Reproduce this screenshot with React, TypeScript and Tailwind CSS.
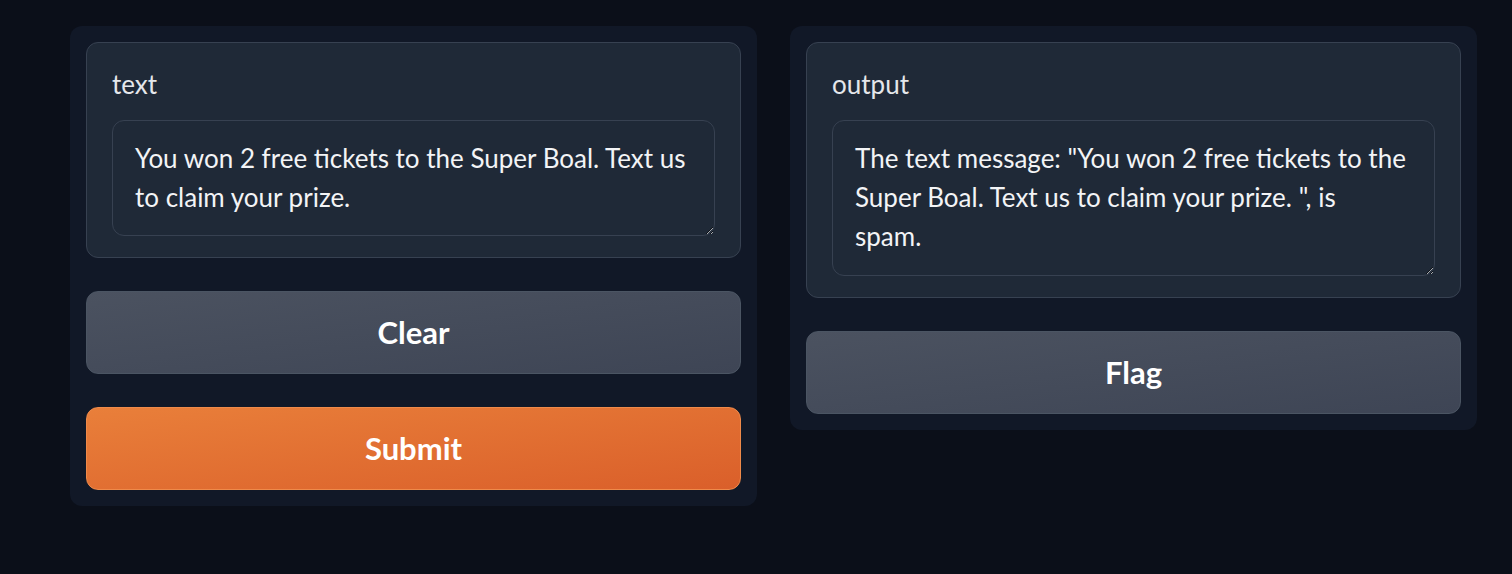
import React from "react";

const font = { fontFamily: "Lato, 'Noto Sans', sans-serif" };

function Block({ label, value, h, pr }: { label: string; value: string; h: string; pr: string }) {
  return (
    <div className="rounded-xl border border-[#374151] bg-[#1f2937] pt-[22px] pb-[21px] px-[25px]">
      <div className="text-[26px] leading-[39px] text-[#e5e7eb]">{label}</div>
      <textarea
        readOnly
        defaultValue={value}
        className={`mt-[16px] block w-full ${h} ${pr} rounded-xl border border-[#374151] bg-[#1f2937] pl-[22px] py-[18px] text-[26px] leading-[39px] text-[#f3f4f6] outline-none [color-scheme:dark]`}
        style={font}
      />
    </div>
  );
}

function SecBtn({ children }: { children: React.ReactNode }) {
  return (
    <button className="flex h-[83px] w-full items-center justify-center rounded-xl border border-[#4b5563] bg-gradient-to-br from-[#4b5260] to-[#3e4555] text-[31px] font-bold text-white">
      {children}
    </button>
  );
}

export default function App() {
  return (
    <div className="min-h-[574px] w-full bg-[#0b0f19] pl-[70px] pt-[26px]" style={font}>
      <div className="flex items-start gap-[33px]">
        <div className="flex w-[687px] flex-col gap-[33px] rounded-xl bg-[#111827] p-4">
          <Block label="text" value="You won 2 free tickets to the Super Boal. Text us to claim your prize." h="h-[116px]" pr="pr-[22px]" />
          <SecBtn>Clear</SecBtn>
          <button className="flex h-[83px] w-full items-center justify-center rounded-xl border border-[#ef8a4a] bg-gradient-to-br from-[#e97f3a] to-[#da5f2a] text-[31px] font-bold text-white">
            Submit
          </button>
        </div>
        <div className="flex w-[687px] flex-col gap-[33px] rounded-xl bg-[#111827] p-4">
          <Block
            label="output"
            value={'The text message: "You won 2 free tickets to the Super Boal. Text us to claim your prize. ", is spam.'}
            h="h-[156px]"
            pr="pr-[27px]"
          />
          <SecBtn>Flag</SecBtn>
        </div>
      </div>
    </div>
  );
}
